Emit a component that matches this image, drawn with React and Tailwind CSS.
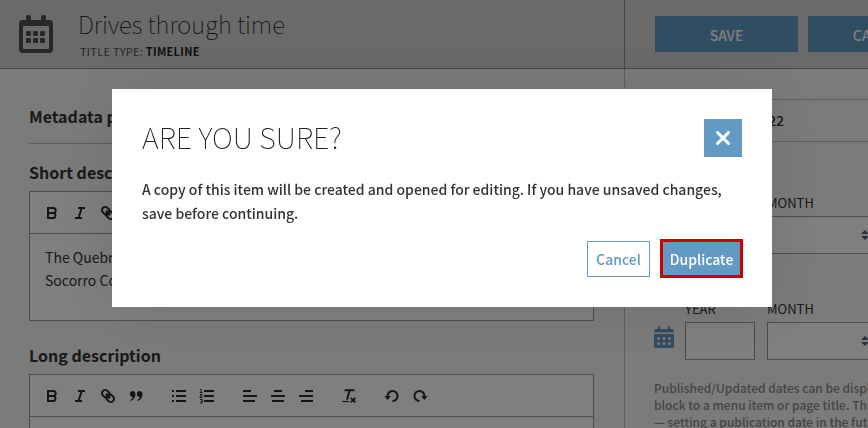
import React, { useState } from 'react';
import clsx from 'clsx';

const toolIcons = {
  bold: (
    <path
      d="M4 3h5.2a2.4 2.4 0 0 1 0 5H4zM4 8h5.8a2.7 2.7 0 0 1 0 5H4z"
      fill="none"
      stroke="currentColor"
      strokeWidth="2"
    />
  ),
  italic: (
    <path
      d="M6 3h7M3 13h7M9.7 3 6.5 13"
      fill="none"
      stroke="currentColor"
      strokeWidth="2"
    />
  ),
  link: (
    <g
      fill="none"
      stroke="currentColor"
      strokeWidth="2"
      transform="rotate(45 8 8)"
    >
      <rect x="0.8" y="4.8" width="8.4" height="6.4" rx="3.2" />
      <rect x="6.8" y="4.8" width="8.4" height="6.4" rx="3.2" />
      <path d="M5 8h6" />
    </g>
  ),
  quote: (
    <path
      d="M4.6 3C6.4 3 7.5 4.3 7.5 6.300c0 3-1.9 5.700-4.700 6.700l-.6-.9C3.700 11.200 4.600 10 4.700 8.900 2.900 9 1.900 7.700 1.900 6 1.900 4.200 3 3 4.600 3zM11.600 3c1.800 0 2.900 1.300 2.900 3.300 0 3-1.900 5.700-4.700 6.700l-.6-.9c1.500-.9 2.400-2.100 2.500-3.200C9.900 9 8.900 7.700 8.900 6c0-1.800 1.100-3 2.700-3z"
      fill="currentColor"
    />
  ),
  bullets: (
    <path
      d="M1 3h2M5 3h10M1 8h2M5 8h10M1 13h2M5 13h10"
      fill="none"
      stroke="currentColor"
      strokeWidth="2"
    />
  ),
  numbers: (
    <g fill="none" stroke="currentColor">
      <path d="M5 3h10M5 8h10M5 13h10" strokeWidth="2" />
      <path d="M1 1.5h1.200v3M.8 4.500h3M1 6.500h2v1.500h-2v1.500h2.500M1 11.500h2.200v3.500h-2.200M1.500 13.200h1.700" />
    </g>
  ),
  left: (
    <path
      d="M1 3h8M1 8h14M1 13h12"
      fill="none"
      stroke="currentColor"
      strokeWidth="2"
    />
  ),
  center: (
    <path
      d="M4 3h8M1 8h14M2 13h12"
      fill="none"
      stroke="currentColor"
      strokeWidth="2"
    />
  ),
  right: (
    <path
      d="M7 3h8M1 8h14M3 13h12"
      fill="none"
      stroke="currentColor"
      strokeWidth="2"
    />
  ),
  clear: (
    <g fill="none" stroke="currentColor">
      <path d="M3.500 2.200h10" strokeWidth="2" />
      <path d="M8.500 2.500 6 11.800" strokeWidth="2" />
      <path d="M1 13.500h7" strokeWidth="1.200" />
      <path d="m9.800 9.800 4.600 4.600m0-4.600-4.600 4.600" strokeWidth="1.900" />
    </g>
  ),
  undo: (
    <g>
      <path
        d="M3.600 8.500A5 5 0 1 1 8.500 13"
        fill="none"
        stroke="currentColor"
        strokeWidth="2"
      />
      <path d="M.4 8h6.400L3.600 12z" fill="currentColor" />
    </g>
  ),
  redo: (
    <g>
      <path
        d="M12.400 8.500A5 5 0 1 0 7.500 13"
        fill="none"
        stroke="currentColor"
        strokeWidth="2"
      />
      <path d="M15.600 8h-6.400l3.200 4z" fill="currentColor" />
    </g>
  ),
};

const toolGroups = [
  ['bold', 'italic', 'link', 'quote'],
  ['bullets', 'numbers'],
  ['left', 'center', 'right'],
  ['clear'],
  ['undo', 'redo'],
];

function Toolbar() {
  return (
    <div className="flex h-[42px] items-center gap-[15px] border-b border-[#9a9a9a] px-[14px] text-[#2b2b2b]">
      {toolGroups.map((group, index) => (
        <div key={index} className="flex">
          {group.map(name => (
            <button
              key={name}
              type="button"
              aria-label={name}
              className="flex h-7 w-7 items-center"
            >
              <svg className="h-4 w-4" viewBox="0 0 16 16" aria-hidden="true">
                {toolIcons[name]}
              </svg>
            </button>
          ))}
        </div>
      ))}
    </div>
  );
}

function Editor({ id, label, text, className }) {
  return (
    <section className={className}>
      <h3 id={id} className="text-base leading-6 font-bold">
        {label}
      </h3>
      <div className="mt-[7px] border border-[#9a9a9a] bg-white">
        <Toolbar />
        <div
          role="textbox"
          aria-labelledby={id}
          aria-multiline="true"
          className="h-[86px] px-[15px] pt-3 text-sm leading-[23px]"
        >
          {text.map(line => (
            <p key={line}>{line}</p>
          ))}
        </div>
      </div>
    </section>
  );
}

function TimelineIcon() {
  return (
    <svg className="h-10 w-[34px]" viewBox="0 0 34 40" aria-hidden="true">
      <path
        fill="currentColor"
        fillRule="evenodd"
        d="M8.500 1h2a1.500 1.500 0 0 1 1.500 1.500V6h10V2.500A1.500 1.500 0 0 1 23.500 1h2A1.500 1.500 0 0 1 27 2.500V6h3.300A3.700 3.700 0 0 1 34 9.700v25.600a3.700 3.700 0 0 1-3.700 3.700H3.700A3.700 3.700 0 0 1 0 35.300V9.700A3.700 3.700 0 0 1 3.700 6H7V2.500A1.500 1.500 0 0 1 8.500 1zM4 12v23h26V12z"
      />
      {[17, 24].map(y =>
        [7, 14, 21].map(x => (
          <rect
            key={`${x}-${y}`}
            x={x}
            y={y}
            width="5"
            height="5"
            rx="1"
            fill="currentColor"
          />
        ))
      )}
    </svg>
  );
}

function CalendarIcon() {
  return (
    <svg
      className="h-[22px] w-5 text-[#629ac4]"
      viewBox="0 0 20 22"
      aria-hidden="true"
    >
      <path
        fill="currentColor"
        d="M5 0a1 1 0 0 1 1 1v2h8V1a1 1 0 0 1 2 0v2h2a2 2 0 0 1 2 2v1.500H0V5a2 2 0 0 1 2-2h2V1a1 1 0 0 1 1-1zM0 8h20v12a2 2 0 0 1-2 2H2a2 2 0 0 1-2-2z"
      />
      {[12.5, 17.5].map(y =>
        [4.5, 10, 15.5].map(x => (
          <circle key={`${x}-${y}`} cx={x} cy={y} r="1.5" fill="#f4f4f4" />
        ))
      )}
    </svg>
  );
}

function DateRow({ id, className }) {
  return (
    <div className={clsx('flex items-end', className)}>
      <div className="flex h-[38px] w-[31px] shrink-0 items-center pb-2">
        <CalendarIcon />
      </div>
      <div className="mr-3 w-[70px] shrink-0">
        <label
          htmlFor={`${id}-year`}
          className="block text-[13px] leading-[26px]"
        >
          YEAR
        </label>
        <input
          id={`${id}-year`}
          type="text"
          className="block h-[38px] w-full border border-[#9a9a9a] bg-white px-2"
        />
      </div>
      <div className="w-[110px] shrink-0">
        <label
          htmlFor={`${id}-month`}
          className="block text-[13px] leading-[26px]"
        >
          MONTH
        </label>
        <div className="relative">
          <select
            id={`${id}-month`}
            className="block h-[38px] w-full appearance-none border border-[#9a9a9a] bg-white px-2"
          >
            <option value=""></option>
            <option value="1">January</option>
            <option value="2">February</option>
          </select>
          <svg
            className="pointer-events-none absolute top-[14px] right-2 h-[10px] w-2 text-[#5d6285]"
            viewBox="0 0 8 10"
            aria-hidden="true"
          >
            <path d="M4 0l4 4H0zM0 6h8l-4 4z" fill="currentColor" />
          </svg>
        </div>
      </div>
    </div>
  );
}

function ConfirmDialog({ onClose }) {
  return (
    <div className="fixed inset-0 flex items-start justify-center bg-black/50 pt-[89px] pl-4">
      <div
        role="dialog"
        aria-modal="true"
        aria-labelledby="confirm-title"
        className="w-full max-w-[660px] bg-white px-[30px] pt-[30px] pb-[29px] shadow-[0_0_60px_rgba(0,0,0,0.1)]"
      >
        <div className="flex items-start justify-between">
          <h2
            id="confirm-title"
            className="text-[29px] leading-[34px] font-thin text-[#222]"
          >
            ARE YOU SURE?
          </h2>
          <button
            type="button"
            aria-label="Close"
            onClick={onClose}
            className="flex h-[38px] w-[38px] items-center justify-center bg-[#629ac4] text-white"
          >
            <svg className="h-4 w-4" viewBox="0 0 16 16" aria-hidden="true">
              <path
                d="m2.500 2.500 11 11m0-11-11 11"
                stroke="currentColor"
                strokeWidth="3"
                strokeLinecap="round"
              />
            </svg>
          </button>
        </div>
        <p className="mt-5 text-sm leading-6 font-medium">
          A copy of this item will be created and opened for editing. If you
          have unsaved changes, save before continuing.
        </p>
        <div className="mt-[14px] -mr-px flex items-center justify-end gap-[10px] text-sm font-medium">
          <button
            type="button"
            onClick={onClose}
            className="h-9 w-[63px] border border-[#629ac4] pt-px text-[#629ac4]"
          >
            Cancel
          </button>
          <button
            type="button"
            onClick={onClose}
            className="h-[39px] w-[83px] border-3 border-[#cf0000] bg-[#629ac4] pt-px text-white"
          >
            Duplicate
          </button>
        </div>
      </div>
    </div>
  );
}

export default function App() {
  const [confirming, setConfirming] = useState(true);

  return (
    <div className="flex h-screen flex-col overflow-hidden bg-[#f6f6f6] font-['Noto_Sans_CJK_SC',sans-serif] text-[#333]">
      <header className="flex shrink-0 border-b border-[#8e8e8e] bg-[#d4d4d4]">
        <div className="flex h-[68px] min-w-0 flex-1 items-start pt-[14px] pl-[19px] text-[#4f4f4f]">
          <TimelineIcon />
          <div className="pl-[25px]">
            <h1 className="-mt-[6px] text-2xl leading-8 font-thin text-[#111]">
              Drives through time
            </h1>
            <p className="mt-[3px] pl-[2px] text-[11px] leading-4 tracking-wide">
              TITLE TYPE: <strong className="text-[#222]">TIMELINE</strong>
            </p>
          </div>
        </div>
        <div className="flex w-[244px] shrink-0 items-center gap-[10px] overflow-hidden border-l border-[#8e8e8e] pl-[30px] text-sm font-medium">
          <button
            type="button"
            onClick={() => setConfirming(true)}
            className="h-9 w-[143px] shrink-0 bg-[#629ac4] pt-px text-white"
          >
            SAVE
          </button>
          <button
            type="button"
            className="h-9 w-[143px] shrink-0 bg-[#629ac4] pt-px text-white"
          >
            CANCEL
          </button>
        </div>
      </header>

      <div className="flex min-h-0 flex-1">
        <main className="min-w-0 flex-1 overflow-hidden pt-[35px] pr-[30px] pl-[29px]">
          <h2 className="border-b border-[#bdbdbd] pb-[15px] text-base leading-6 font-bold">
            Metadata properties
          </h2>
          <Editor
            id="short-description"
            label="Short description"
            className="mt-4"
            text={['The Quebradas Backcountry Byway', 'Socorro County']}
          />
          <Editor
            id="long-description"
            label="Long description"
            className="mt-[22px]"
            text={[]}
          />
        </main>

        <aside className="w-[244px] shrink-0 overflow-hidden border-l border-[#c4c4c4] pt-[30px] pl-[29px]">
          <p className="w-[300px] border-y border-[#bdbdbd] py-[9px] text-sm leading-[23px] font-medium">
            Created 05/10/2022
          </p>
          <DateRow id="published" className="mt-[48px]" />
          <DateRow id="updated" className="mt-[42px]" />
          <p className="mt-[19px] w-[300px] text-xs leading-[17px] font-medium text-[#8a8a8a]">
            Published/Updated dates can be displayed in a block to a menu item
            or page title. This is for display —&nbsp;setting a publication date
            in the future does not schedule it.
          </p>
        </aside>
      </div>

      {confirming && <ConfirmDialog onClose={() => setConfirming(false)} />}
    </div>
  );
}
